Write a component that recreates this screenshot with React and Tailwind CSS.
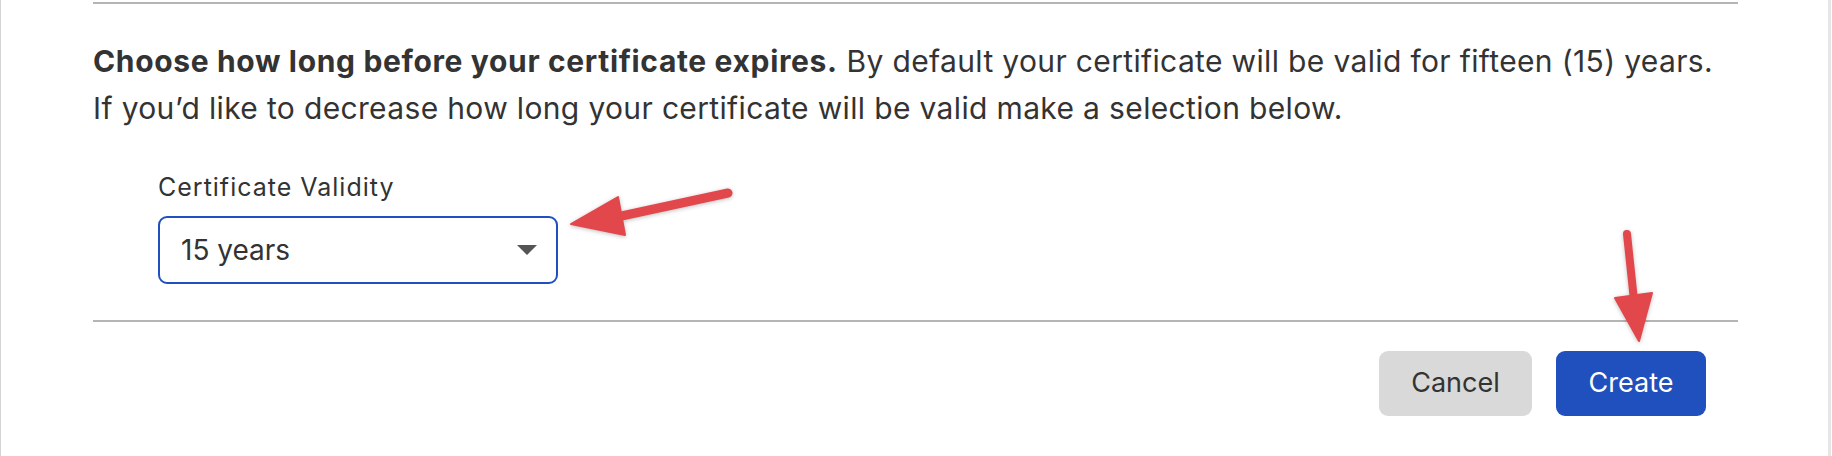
import React from "react";

function Arrow({ tail, tip, c1, c2, w }) {
  const bx = (c1[0] + c2[0]) / 2;
  const by = (c1[1] + c2[1]) / 2;
  return (
    <g>
      <line x1={tail[0]} y1={tail[1]} x2={bx} y2={by} stroke="#e2474b" strokeWidth={w} strokeLinecap="round" />
      <polygon points={`${tip[0]},${tip[1]} ${c1[0]},${c1[1]} ${c2[0]},${c2[1]}`} fill="#e2474b" stroke="#e2474b" strokeWidth="2" strokeLinejoin="round" />
    </g>
  );
}

export default function App() {
  return (
    <div className="relative w-[1832px] h-[456px] bg-white border-l border-[#d4d4d4] font-['Inter','Noto_Sans',sans-serif] text-[#333333] overflow-hidden">
      <div className="absolute right-0 top-0 bottom-0 w-[4px] border-l-[3px] border-[#e6e6e6]" />
      <div className="ml-[92px] w-[1645px] pt-[2px]">
        <div className="h-[2px] bg-[#b5b5b5]" />
        <p className="mt-[34px] text-[30px] leading-[47px] tracking-[0.35px] whitespace-nowrap">
          <span className="font-bold tracking-[0.65px]">Choose how long before your certificate expires.</span>{" "}
          By default your certificate will be valid for fifteen (15) years.
          <br />
          If you’d like to decrease how long your certificate will be valid make a selection below.
        </p>
        <div className="ml-[65px] mt-[40px]">
          <div className="text-[25px] leading-[30px] tracking-[1px]">Certificate Validity</div>
          <div className="mt-[14px] w-[400px] h-[68px] border-2 border-[#2050bf] rounded-[9px] flex items-center justify-between pl-[21px] pr-[19px]">
            <span className="text-[28px] tracking-[0px]">15 years</span>
            <svg width="20" height="10" viewBox="0 0 20 10">
              <polygon points="0,0 20,0 10,10" fill="#555555" />
            </svg>
          </div>
        </div>
        <div className="mt-[36px] h-[2px] bg-[#b5b5b5]" />
        <div className="mt-[29px] flex justify-end gap-[24px] pr-[32px]">
          <button className="w-[153px] h-[65px] rounded-[9px] bg-[#d9d9d9] text-[27px] text-[#333333]">Cancel</button>
          <button className="w-[150px] h-[65px] rounded-[9px] bg-[#2050bd] text-[27px] text-white">Create</button>
        </div>
      </div>
      <svg className="absolute left-0 top-0 pointer-events-none drop-shadow-[0_1px_2px_rgba(0,0,0,0.25)]" width="1832" height="456">
        <Arrow tail={[727, 193]} tip={[570, 224]} c1={[617, 197]} c2={[624, 235]} w={9} />
        <Arrow tail={[1626, 234]} tip={[1638, 341]} c1={[1614, 298]} c2={[1651, 293]} w={8} />
      </svg>
    </div>
  );
}
